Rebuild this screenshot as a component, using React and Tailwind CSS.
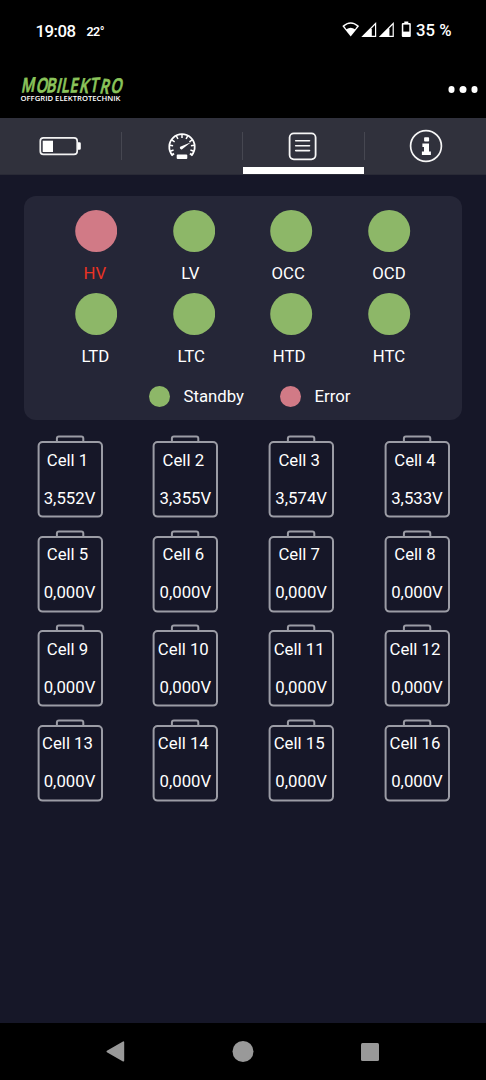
import React from "react";

const states = [
  { label: "HV", error: true, shift: "-translate-x-px" },
  { label: "LV", shift: "-translate-x-[3.5px]" },
  { label: "OCC", shift: "-translate-x-[3.5px]" },
  { label: "OCD", shift: "-translate-x-[0.5px]" },
  { label: "LTD", shift: "-translate-x-[0.5px]" },
  { label: "LTC", shift: "-translate-x-[2.5px]" },
  { label: "HTD", shift: "-translate-x-[2.5px]" },
  { label: "HTC", shift: "-translate-x-[0.5px]" },
];

const volts = ["3,552V", "3,355V", "3,574V", "3,533V"];
const cells = Array.from({ length: 16 }, (_, i) => ({
  name: `Cell ${i + 1}`,
  value: volts[i] || "0,000V",
}));

function StatusBar() {
  return (
    <div className="flex h-[60px] items-center justify-between pl-[35px] pr-[34px] text-white">
      <div className="flex items-center gap-[10px] pt-[2px]">
        <svg width="41" height="20" className="block overflow-visible">
          <text x="0.5" y="15.8" fontSize="16.8" fontWeight="500" textLength="40.5" fill="#fff">19:08</text>
        </svg>
        <svg width="18" height="20" className="block overflow-visible">
          <text x="0.5" y="14.8" fontSize="12.5" fontWeight="600" textLength="18" fill="#fff">22°</text>
        </svg>
      </div>
      <svg width="110" height="20" viewBox="342 21 110 20" className="overflow-visible" fill="#fff">
        <path d="M342.3 27Q350.7 19.4 359.1 27L350.7 37.6Z" />
        <path d="M344.4 27.3Q350.7 22.4 357 27.3L355 30.2Q350.7 27.2 346.4 30.2Z" fill="#000" />
        <path d="M361.3 38L376.2 23V38Z" />
        <path d="M371.8 29.2L375 26V36.8H371.8Z" fill="#000" />
        <path d="M378.8 38L393.8 23V38Z" />
        <path d="M389.4 29.2L392.6 26V36.8H389.4Z" fill="#000" />
        <path d="M404.3 22.5h4v1.8h-4z" />
        <rect x="401.8" y="24" width="9" height="14" rx="1" />
        <path d="M403.3 25.6h6v7h-6z" fill="#000" />
        <text x="416" y="36.7" fontSize="16.5" fontWeight="500" textLength="35.5" lengthAdjust="spacingAndGlyphs">35 %</text>
      </svg>
    </div>
  );
}

function Header() {
  return (
    <div className="flex h-[58px] items-start justify-between pl-5 pr-2">
      <svg width="106" height="30" viewBox="20 76 106 30" className="mt-4 overflow-visible">
        <g transform="translate(20.8 92.4) skewX(-12) scale(.735 1)">
          <text
            x="0 19.5 34 47.5 54.5 66 78.5 93.5 106.5 121.5"
            y="0 -.5 0 0 0 0 .2 -.2 .6 0"
            rotate="-3 3 -2 2 -2 -2 3 -2 4 2"
            fontSize="20"
            fontWeight="600"
            fill="#8bc45b"
            stroke="#8bc45b"
            strokeWidth=".7"
            className="font-['Open_Sans',sans-serif]"
          >
            MOBILEKTRO
          </text>
        </g>
        <text x="20.5" y="101" fontSize="7" fontWeight="600" textLength="100" lengthAdjust="spacingAndGlyphs" fill="#fff" className="font-['Open_Sans',sans-serif]">
          OFFGRID ELEKTROTECHNIK
        </text>
      </svg>
      <div className="mt-[26px] flex translate-x-[-0.5px] gap-[5px]">
        <i className="size-[6.5px] rounded-full bg-white" />
        <i className="size-[6.5px] rounded-full bg-white" />
        <i className="size-[6.5px] rounded-full bg-white" />
      </div>
    </div>
  );
}

const ticks = [-110, -82, -55, -27, 0, 27, 55, 82, 110];

function Tabs() {
  return (
    <div className="grid h-[57px] grid-cols-[121px_121px_121px_123px] border-b border-[#292a36] bg-[#30313c]">
      <div className="flex justify-center pr-[2px]">
        <svg width="42" height="20" viewBox="39 136 42 20" className="mt-[18px] block" fill="none">
          <rect x="40.3" y="137.8" width="36.9" height="16.6" rx="3.2" stroke="#f2f2f2" strokeWidth="1.7" />
          <rect x="42.7" y="140.7" width="10.3" height="11.3" fill="#fff" />
          <path d="M78 142.3h1.6a1.2 1.2 0 0 1 1.2 1.2v5a1.2 1.2 0 0 1-1.2 1.2H78z" fill="#fff" />
        </svg>
      </div>
      <div className="flex">
        <i className="mt-[14px] h-7 w-px bg-[#464751]" />
        <div className="flex flex-1 justify-center">
          <svg width="30" height="30" viewBox="-15 -15 30 30" className="mt-[14px] block" fill="none" stroke="#fff">
            <path d="M-9.7 8.1A12.7 12.7 0 1 1 9.7 8.1" strokeWidth="1.8" />
            {ticks.map((a) => (
              <path key={a} d="M0-12.5V-9" strokeWidth="1.5" transform={`rotate(${a})`} />
            ))}
            <path d="M-10.5 8.5L-8 6.5M10.5 8.5L8 6.5" strokeWidth="2" />
            <path d="M9-4.8L.7 1.8A1.6 1.6 0 1 1-.6-.8Z" fill="#fff" stroke="none" />
            <rect x="-5.3" y="7.5" width="10.6" height="4.5" rx="1" fill="#fff" stroke="none" />
          </svg>
        </div>
      </div>
      <div className="flex flex-col">
        <div className="flex h-[49px] items-start">
          <i className="mt-[14px] h-7 w-px bg-[#464751]" />
          <div className="flex flex-1 justify-center pr-px">
            <svg width="29" height="29" viewBox="0 0 29 29" className="mt-[14px] block" fill="none" stroke="#f6f6f6" strokeLinecap="round">
              <rect x="1.6" y="1.3" width="26" height="26" rx="4.2" strokeWidth="1.8" />
              <path d="M7.7 8.7h13.8M7.7 13.7h13.8M7.7 18.6h13.8" strokeWidth="1.6" />
            </svg>
          </div>
        </div>
        <div className="ml-px h-[7px] w-[121px] bg-white" />
      </div>
      <div className="flex pl-px">
        <i className="mt-[14px] h-7 w-px bg-[#464751]" />
        <div className="flex flex-1 justify-center">
          <svg width="34" height="34" viewBox="-17 -17 34 34" className="mt-[11px] block" fill="#fff">
            <circle r="15.4" fill="none" stroke="#f6f6f6" strokeWidth="1.7" />
            <rect x="-1.9" y="-8.8" width="5" height="4.4" rx=".8" />
            <path d="M-3.6-2.6H3V5.5H4.9V9H-4.1V5.5H-2V1.1H-3.6Z" />
          </svg>
        </div>
      </div>
    </div>
  );
}

function StatePanel() {
  return (
    <section className="mx-6 mt-[21px] h-56 rounded-xl bg-[#252637] pt-[14px]">
      <div className="grid grid-cols-4 pl-[23px] pr-[23.6px]">
        {states.map((s) => (
          <div key={s.label} className="flex h-[83px] flex-col items-center">
            <svg width="42.4" height="42" viewBox="0 0 42.4 42" className="block">
              <circle cx="21.2" cy="21" r="21" fill={s.error ? "#d17a86" : "#8db768"} />
            </svg>
            <div className={`mt-[11px] text-[16.75px] leading-5 ${s.shift} ${s.error ? "text-[#ea3323]" : "text-white"}`}>
              {s.label}
            </div>
          </div>
        ))}
      </div>
      <div className="mt-[10px] flex h-[21px] items-center pl-[125px] text-[16.75px] leading-5">
        <i className="size-[21px] rounded-full bg-[#8db768]" />
        <span className="mb-px ml-[13.5px] w-[96.5px]">Standby</span>
        <i className="size-[21px] rounded-full bg-[#d17a86]" />
        <span className="mb-px ml-[13.5px]">Error</span>
      </div>
    </section>
  );
}

function Cell({ name, value }) {
  return (
    <div className="relative flex h-[94.5px] w-[65px] flex-col items-center">
      <svg width="67" height="84" viewBox="-1 -1 67 84" className="absolute -left-px -top-px" fill="none" stroke="#9b9ca5" strokeWidth="2">
        <path d="M18.9 6V3.4A2 2 0 0 1 20.9 1.4H43.3A2 2 0 0 1 45.3 3.4V6" />
        <rect x=".6" y="7" width="63.4" height="74.6" rx="4" />
      </svg>
      <div className="mt-[7.7px] flex flex-col items-center text-[16.75px] leading-5">
        <span className="mt-[7px] -translate-x-[2.5px] whitespace-nowrap">{name}</span>
        <span className="mt-[18px] -translate-x-[0.5px] whitespace-nowrap">{value}</span>
      </div>
    </div>
  );
}

function NavBar() {
  return (
    <div className="flex h-[57px] items-center justify-between bg-black pl-[106px] pr-[107px]">
      <svg width="19" height="21" viewBox="0 0 19 21">
        <path d="M1.3 10.5L17.4 1.2V19.8Z" fill="#999" stroke="#999" strokeWidth="1.6" strokeLinejoin="round" />
      </svg>
      <div className="size-[21px] -translate-x-[0.5px] rounded-full bg-[#999]" />
      <div className="size-[18px] rounded-[1.5px] bg-[#999]" />
    </div>
  );
}

export default function App() {
  return (
    <div className="flex h-[1080px] w-[486px] flex-col overflow-hidden bg-[#161728] font-[Roboto,sans-serif] text-white">
      <div className="bg-black">
        <StatusBar />
        <Header />
      </div>
      <Tabs />
      <main className="flex-1">
        <StatePanel />
        <div className="mt-[15px] grid grid-cols-[65px_65px_65px_65px] justify-between pl-[37.5px] pr-9">
          {cells.map((c) => (
            <Cell key={c.name} {...c} />
          ))}
        </div>
      </main>
      <NavBar />
    </div>
  );
}
